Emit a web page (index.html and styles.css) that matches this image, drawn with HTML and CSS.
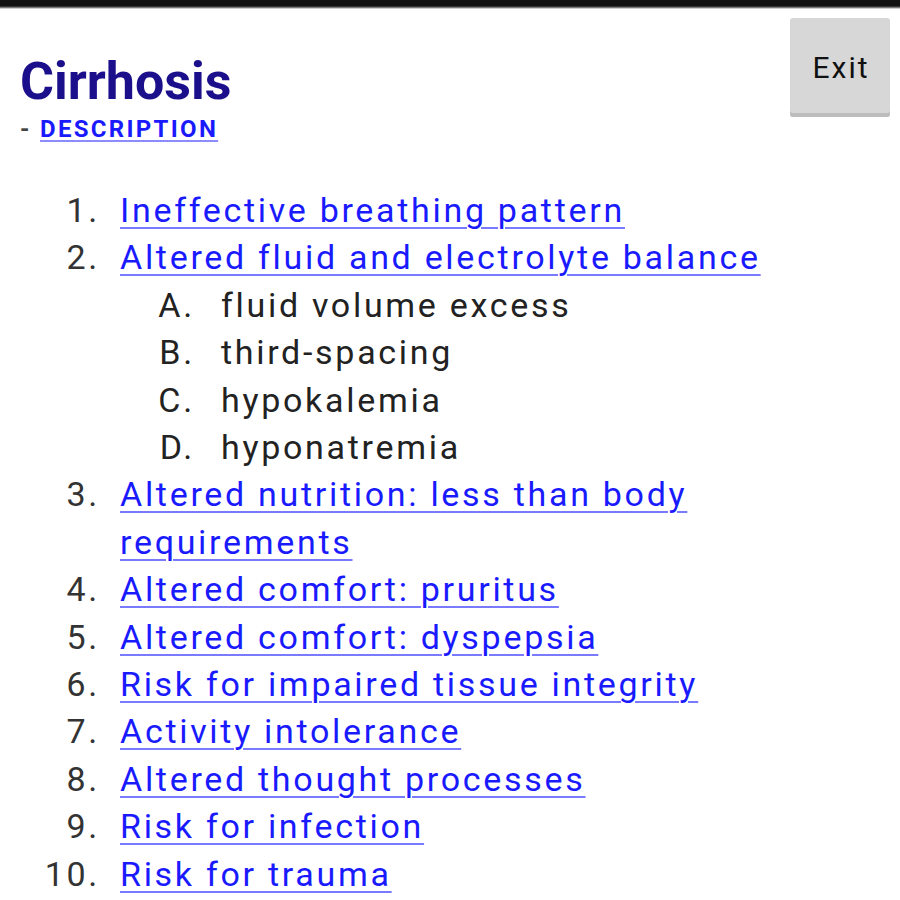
FILE: index.html
```html
<!DOCTYPE html>
<html lang="en">
<head>
    <meta charset="UTF-8">
    <meta name="viewport" content="width=device-width, initial-scale=1.0">
    <title>Cirrhosis</title>
    <link rel="stylesheet" href="styles.css">
</head>
<body>
    <div class="topbar"></div>

    <main class="page">
        <header class="head">
            <div class="title-block">
                <h1>Cirrhosis</h1>
                <div class="sub">- <a href="#">DESCRIPTION</a></div>
            </div>
            <button class="exit">Exit</button>
        </header>

        <ol class="items">
            <li><a href="#">Ineffective breathing pattern</a></li>
            <li><a href="#">Altered fluid and electrolyte balance</a>
                <ol class="subitems">
                    <li>fluid volume excess</li>
                    <li>third-spacing</li>
                    <li>hypokalemia</li>
                    <li>hyponatremia</li>
                </ol>
            </li>
            <li><a href="#">Altered nutrition: less than body requirements</a></li>
            <li><a href="#">Altered comfort: pruritus</a></li>
            <li><a href="#">Altered comfort: dyspepsia</a></li>
            <li><a href="#">Risk for impaired tissue integrity</a></li>
            <li><a href="#">Activity intolerance</a></li>
            <li><a href="#">Altered thought processes</a></li>
            <li><a href="#">Risk for infection</a></li>
            <li><a href="#">Risk for trauma</a></li>
        </ol>
    </main>
</body>
</html>
```

FILE: styles.css
```css
* {
    margin: 0;
    padding: 0;
    box-sizing: border-box;
}

body {
    font-family: Roboto, "Noto Sans", sans-serif;
    background-color: #ffffff;
    color: #222222;
    overflow: hidden;
}

.topbar {
    height: 9px;
    background: linear-gradient(#111111 0, #111111 6px, #9a9a9a 8px, #ffffff 9px);
}

.page {
    padding: 0 10px 0 20px;
}

.head {
    display: flex;
    justify-content: space-between;
    align-items: flex-start;
}

.title-block {
    padding-top: 43px;
}

h1 {
    font-size: 52px;
    line-height: 60px;
    font-weight: bold;
    color: #1c0f8c;
}

.sub {
    margin-top: 3px;
    font-size: 24px;
    line-height: 28px;
    font-weight: bold;
    letter-spacing: 2.3px;
    color: #444444;
}

.sub a {
    color: #1a1aff;
    text-decoration-thickness: 2px;
    text-underline-offset: 3px;
    text-decoration-color: #8c8cff;
}

.exit {
    margin-top: 9px;
    width: 100px;
    height: 99px;
    border: none;
    border-radius: 3px;
    background-color: #d7d7d7;
    box-shadow: inset 0 -4px 0 #bdbdbd;
    font-family: Roboto, "Noto Sans", sans-serif;
    font-size: 30px;
    letter-spacing: 2px;
    color: #111111;
    padding: 0 0 0 2px;
}

.items {
    margin-top: 44px;
    padding-left: 100px;
    font-size: 34px;
    line-height: 47.4px;
    letter-spacing: 2.7px;
}

.items > li::marker {
    content: counter(list-item) ".\2002";
    color: #333333;
}

.items a {
    color: #1a1aff;
    text-decoration-thickness: 2px;
    text-underline-offset: 5px;
    text-decoration-color: #7a7aff;
}

.subitems {
    padding-left: 101px;
    color: #222222;
}

.subitems > li::marker {
    content: counter(list-item, upper-alpha) ".\2002\200A";
    color: #222222;
}
```
